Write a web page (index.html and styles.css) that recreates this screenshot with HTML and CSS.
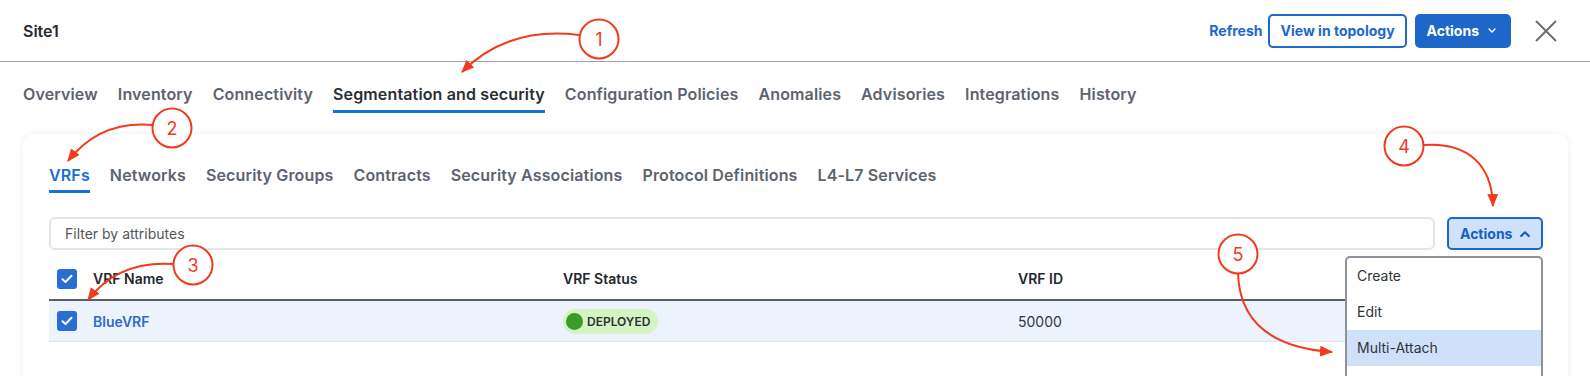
FILE: index.html
```html
<!DOCTYPE html>
<html lang="en">
<head>
    <meta charset="UTF-8">
    <meta name="viewport" content="width=device-width, initial-scale=1.0">
    <title>Site1</title>
    <link rel="stylesheet" href="styles.css">
</head>
<body>
    <div class="page">
        <header class="topbar">
            <h1 class="title">Site1</h1>
            <div class="topbar-actions">
                <a class="link" href="#">Refresh</a>
                <button class="btn btn-outline">View in topology</button>
                <button class="btn btn-primary">Actions
                    <svg class="chev-down" width="8" height="5" viewBox="0 0 8 5"><path d="M1 1l3 3 3-3" fill="none" stroke="#fff" stroke-width="1.4" stroke-linecap="round" stroke-linejoin="round"/></svg>
                </button>
                <button class="close" aria-label="Close">
                    <svg width="22" height="22" viewBox="0 0 22 22"><path d="M1 1L21 21M21 1L1 21" stroke="#6b6f76" stroke-width="2"/></svg>
                </button>
            </div>
        </header>

        <nav class="tabs">
            <a class="tab" href="#">Overview</a>
            <a class="tab" href="#">Inventory</a>
            <a class="tab" href="#">Connectivity</a>
            <a class="tab active" href="#">Segmentation and security</a>
            <a class="tab" href="#">Configuration Policies</a>
            <a class="tab" href="#">Anomalies</a>
            <a class="tab" href="#">Advisories</a>
            <a class="tab" href="#">Integrations</a>
            <a class="tab" href="#">History</a>
        </nav>

        <section class="card">
            <nav class="subtabs">
                <a class="subtab active" href="#">VRFs</a>
                <a class="subtab" href="#">Networks</a>
                <a class="subtab" href="#">Security Groups</a>
                <a class="subtab" href="#">Contracts</a>
                <a class="subtab" href="#">Security Associations</a>
                <a class="subtab" href="#">Protocol Definitions</a>
                <a class="subtab" href="#">L4-L7 Services</a>
            </nav>

            <div class="toolbar">
                <input class="filter" type="text" placeholder="Filter by attributes">
                <div class="menu-wrap">
                    <button class="btn btn-secondary">Actions
                        <svg class="chev-up" width="10" height="6" viewBox="0 0 10 6"><path d="M1.2 5L5 1.3 8.8 5" fill="none" stroke="#1a5fc4" stroke-width="2.2" stroke-linecap="round" stroke-linejoin="round"/></svg>
                    </button>
                    <ul class="menu">
                        <li>Create</li>
                        <li>Edit</li>
                        <li class="hover">Multi-Attach</li>
                    </ul>
                </div>
            </div>

            <div class="table">
                <div class="row head">
                    <div class="cell check"><span class="checkbox"><svg width="12" height="10" viewBox="0 0 12 10"><path d="M1.5 5.2L4.5 8 10.5 1.8" fill="none" stroke="#fff" stroke-width="2" stroke-linecap="round" stroke-linejoin="round"/></svg></span></div>
                    <div class="cell">VRF Name</div>
                    <div class="cell">VRF Status</div>
                    <div class="cell">VRF ID</div>
                </div>
                <div class="row selected">
                    <div class="cell check"><span class="checkbox"><svg width="12" height="10" viewBox="0 0 12 10"><path d="M1.5 5.2L4.5 8 10.5 1.8" fill="none" stroke="#fff" stroke-width="2" stroke-linecap="round" stroke-linejoin="round"/></svg></span></div>
                    <div class="cell"><a class="name-link" href="#">BlueVRF</a></div>
                    <div class="cell"><span class="badge"><span class="dot"></span>DEPLOYED</span></div>
                    <div class="cell">50000</div>
                </div>
            </div>
        </section>

        <!-- callouts drawn over the screen -->
        <svg class="annotations" width="1590" height="376" viewBox="0 0 1590 376">
            <defs>
                <marker id="head" viewBox="0 0 12 10" refX="11" refY="5" markerWidth="13" markerHeight="11" markerUnits="userSpaceOnUse" orient="auto">
                    <path d="M0 0L12 5 0 10z" fill="#f23a1d"/>
                </marker>
            </defs>
            <g fill="none" stroke="#f23a1d" stroke-width="2">
                <path d="M579 35Q508 26 462 72" marker-end="url(#head)"/>
                <path d="M153 125Q100 120 68 161" marker-end="url(#head)"/>
                <path d="M174 264Q118 260 88 300" marker-end="url(#head)"/>
                <path d="M1424 145C1468 142 1492 165 1493 206" marker-end="url(#head)"/>
                <path d="M1238 274C1240 325 1275 348 1332 352" marker-end="url(#head)"/>
            </g>
            <g fill="#fff" stroke="#f23a1d" stroke-width="2">
                <circle cx="599" cy="39" r="19.5"/>
                <circle cx="172" cy="128" r="19.5"/>
                <circle cx="193" cy="265" r="19.5"/>
                <circle cx="1404" cy="146" r="19.5"/>
                <circle cx="1238" cy="254" r="19.5"/>
            </g>
            <g class="callout-num" text-anchor="middle">
                <text x="599" y="45.5">1</text>
                <text x="172" y="134.5">2</text>
                <text x="193" y="271.5">3</text>
                <text x="1404" y="152.5">4</text>
                <text x="1238" y="260.5">5</text>
            </g>
        </svg>
    </div>
</body>
</html>
```

FILE: styles.css
```css
html, body {
    margin: 0;
    height: 376px;
    overflow: hidden;
    background-color: #fff;
}
body {
    font-family: Inter, "Noto Sans", sans-serif;
    color: #23272d;
}
.page {
    position: relative;
    height: 376px;
    overflow: hidden;
}
a {
    text-decoration: none;
}
button {
    font-family: inherit;
    cursor: pointer;
}

/* top bar */
.topbar {
    height: 61px;
    display: flex;
    align-items: center;
    justify-content: space-between;
    padding: 0 33px 0 23px;
    border-bottom: 1px solid #9ea2a8;
}
.title {
    margin: 0;
    font-size: 16px;
    font-weight: 600;
    line-height: 20px;
    color: #25292f;
}
.topbar-actions {
    display: flex;
    align-items: center;
}
.link {
    font-size: 14px;
    font-weight: 700;
    color: #1d68cf;
    margin-right: 6px;
}
.btn {
    display: inline-flex;
    align-items: center;
    gap: 9px;
    height: 34px;
    font-size: 14px;
    font-weight: 700;
    border-radius: 5px;
    box-sizing: border-box;
}
.btn-outline {
    padding: 0 10px;
    background-color: #fff;
    color: #1d68cf;
    border: 2px solid #1d68cf;
}
.btn-primary {
    margin-left: 8px;
    padding: 0 15px 0 12px;
    background-color: #1e66c9;
    color: #fff;
    border: none;
}
.close {
    display: flex;
    margin-left: 24px;
    padding: 0;
    border: none;
    background: none;
}

/* main tabs */
.tabs {
    display: flex;
    gap: 20px;
    padding-left: 23px;
    margin-top: 22px;
}
.tab {
    font-size: 16px;
    font-weight: 600;
    line-height: 20px;
    letter-spacing: 0.14px;
    color: #5c636e;
    padding-bottom: 6px;
    border-bottom: 3px solid transparent;
}
.tab.active {
    color: #2a2e35;
    border-bottom-color: #1a6fd4;
}

/* card */
.card {
    margin: 21px 22px 0 23px;
    padding: 31px 25px 60px 26px;
    border-radius: 10px;
    background-color: #fff;
    box-shadow: 0 0 8px rgba(0, 0, 0, 0.07);
}
.subtabs {
    display: flex;
    gap: 20px;
}
.subtab {
    font-size: 16px;
    font-weight: 600;
    line-height: 20px;
    letter-spacing: 0.14px;
    color: #5c636e;
    padding-bottom: 5px;
    border-bottom: 3px solid transparent;
}
.subtab.active {
    color: #1a6dd1;
    border-bottom-color: #1a6fd4;
}

.toolbar {
    display: flex;
    gap: 12px;
    margin-top: 24px;
}
.filter {
    flex: 1;
    height: 33px;
    box-sizing: border-box;
    padding: 0 14px;
    font-family: inherit;
    font-size: 14px;
    border: 2px solid #e2e5e9;
    border-radius: 6px;
    outline: none;
}
.filter::placeholder {
    color: #51565c;
}
.menu-wrap {
    position: relative;
}
.btn-secondary {
    height: 33px;
    width: 96px;
    padding: 0 0 0 11px;
    gap: 8px;
    background-color: #cfe1fb;
    color: #1a5fc4;
    border: 2px solid #1d66cc;
}
.menu {
    position: absolute;
    top: calc(100% + 6px);
    right: 0;
    width: 198px;
    box-sizing: border-box;
    margin: 0;
    padding: 0 0 30px;
    list-style: none;
    background-color: #fff;
    border: 2px solid #8b929a;
    border-radius: 5px;
    z-index: 5;
}
.menu li {
    height: 36px;
    line-height: 36px;
    padding: 0 10px;
    font-size: 14px;
    color: #30343a;
}
.menu li.hover {
    background-color: #cfe0fa;
}

/* table */
.table {
    margin-top: 8px;
}
.row {
    display: grid;
    grid-template-columns: 44px 470px 455px 1fr;
    align-items: center;
    font-size: 14px;
}
.row.head {
    height: 41px;
    font-weight: 600;
    color: #23272d;
    border-bottom: 2px solid #5b5f65;
}
.row.selected {
    height: 40px;
    background-color: #ecf3fd;
    border-bottom: 1px solid #dfe3e8;
    color: #33373d;
}
.cell.check {
    display: flex;
    padding-left: 8px;
}
.checkbox {
    display: flex;
    align-items: center;
    justify-content: center;
    width: 20px;
    height: 20px;
    border-radius: 3px;
    background-color: #2a6ed4;
}
.name-link {
    font-weight: 600;
    color: #2f6bcd;
}
.badge {
    display: inline-flex;
    align-items: center;
    gap: 4px;
    height: 25px;
    padding: 0 8px 0 3px;
    border-radius: 13px;
    background-color: #d3f5c4;
    font-size: 12px;
    font-weight: 600;
    color: #2c3035;
}
.dot {
    width: 17px;
    height: 17px;
    border-radius: 50%;
    background-color: #3c9a2b;
}

/* callouts */
.annotations {
    position: absolute;
    top: 0;
    left: 0;
    pointer-events: none;
    z-index: 10;
}
.callout-num {
    font-family: Inter, "Liberation Sans", sans-serif;
    font-size: 18px;
    fill: #f23a1d;
}
```
